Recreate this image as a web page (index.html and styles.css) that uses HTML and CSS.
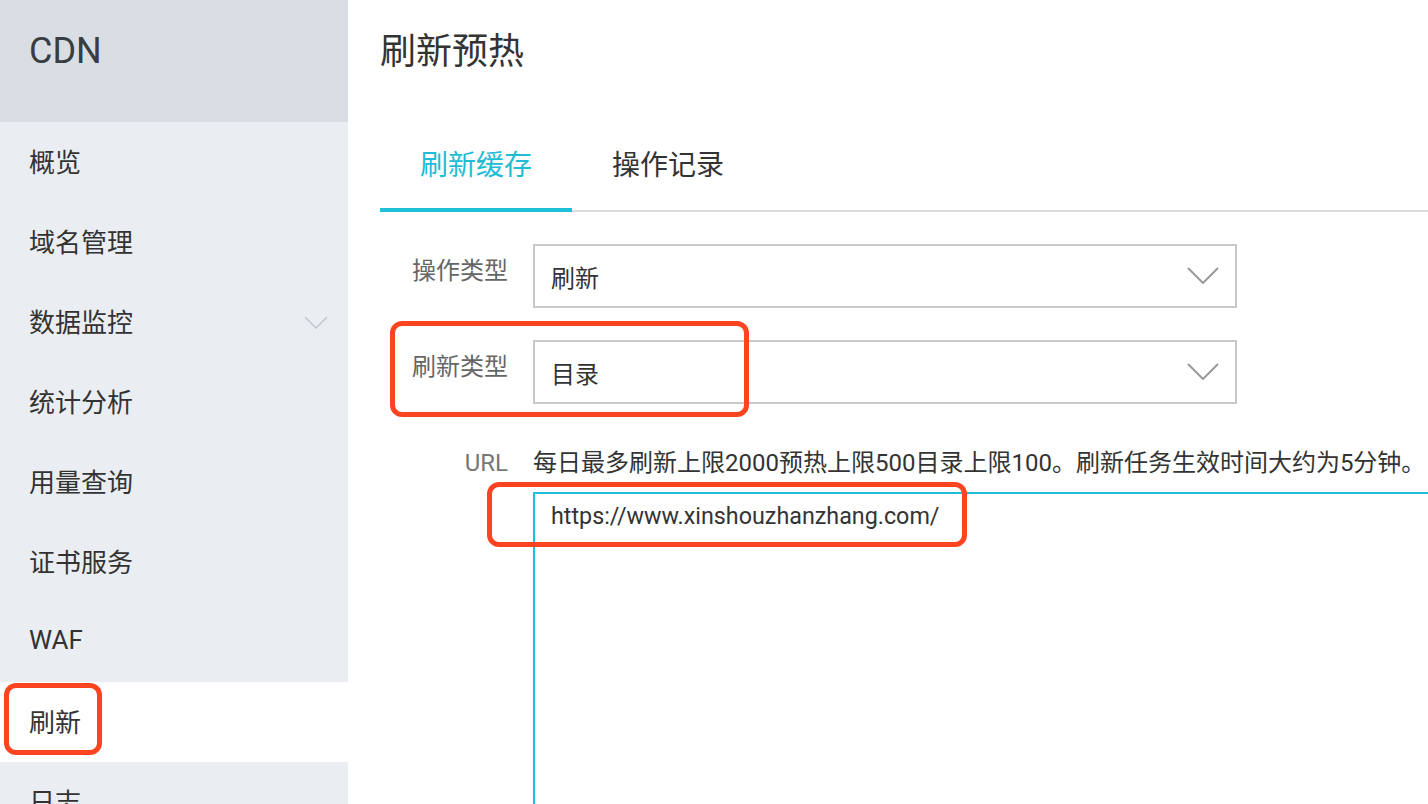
FILE: index.html
```html
<!DOCTYPE html>
<html lang="zh-CN">
<head>
<meta charset="utf-8">
<title>刷新预热 - CDN</title>
<link rel="stylesheet" href="styles.css">
</head>
<body>
<div class="app">
  <aside class="sidebar">
    <div class="sidebar-head">CDN</div>
    <nav class="menu">
      <div class="menu-item">概览</div>
      <div class="menu-item">域名管理</div>
      <div class="menu-item has-sub">数据监控
        <svg class="sub-arrow" width="24" height="13" viewBox="0 0 24 13"><polyline points="1,1 12,12 23,1" fill="none" stroke="#c4c8ce" stroke-width="1.5"/></svg>
      </div>
      <div class="menu-item">统计分析</div>
      <div class="menu-item">用量查询</div>
      <div class="menu-item">证书服务</div>
      <div class="menu-item">WAF</div>
      <div class="menu-item active">刷新</div>
      <div class="menu-item">日志</div>
    </nav>
  </aside>
  <main class="main">
    <h1 class="page-title">刷新预热</h1>
    <div class="tabs">
      <div class="tab active">刷新缓存</div>
      <div class="tab">操作记录</div>
    </div>
    <div class="form">
      <div class="form-row">
        <label class="form-label">操作类型</label>
        <div class="select">
          <span>刷新</span>
          <svg class="select-arrow" width="32" height="17" viewBox="0 0 32 17"><polyline points="1,1 16,16 31,1" fill="none" stroke="#9a9a9a" stroke-width="2"/></svg>
        </div>
      </div>
      <div class="form-row">
        <label class="form-label">刷新类型</label>
        <div class="select">
          <span>目录</span>
          <svg class="select-arrow" width="32" height="17" viewBox="0 0 32 17"><polyline points="1,1 16,16 31,1" fill="none" stroke="#9a9a9a" stroke-width="2"/></svg>
        </div>
      </div>
      <div class="form-row url-row">
        <label class="form-label url-label">URL</label>
        <div class="url-field">
          <div class="hint">每日最多刷新上限2000预热上限500目录上限100。刷新任务生效时间大约为5分钟。</div>
          <div class="textarea">https://www.xinshouzhanzhang.com/</div>
        </div>
      </div>
    </div>
  </main>
</div>
<div class="mark mark-type"></div>
<div class="mark mark-url"></div>
<div class="mark mark-menu"></div>
</body>
</html>
```

FILE: styles.css
```css
html, body {
  margin: 0;
  padding: 0;
  height: 100%;
  background: #ffffff;
}

body {
  position: relative;
  overflow: hidden;
  font-family: "Roboto", "Noto Sans CJK SC", sans-serif;
  color: #333333;
}

.app {
  display: flex;
  height: 100vh;
  overflow: hidden;
}

/* Sidebar */
.sidebar {
  width: 348px;
  flex: 0 0 348px;
  background: #eaedf1;
  display: flex;
  flex-direction: column;
  overflow: hidden;
}

.sidebar-head {
  flex: 0 0 122px;
  height: 122px;
  box-sizing: border-box;
  background: #d9dee4;
  padding: 27px 0 0 29px;
  font-size: 36px;
  line-height: 48px;
  color: #373d41;
}

.menu {
  display: flex;
  flex-direction: column;
  flex-shrink: 0;
}

.menu-item {
  flex: 0 0 80px;
  height: 80px;
  box-sizing: border-box;
  display: flex;
  align-items: center;
  padding-left: 29px;
  padding-bottom: 4px;
  font-size: 26px;
  color: #333333;
  position: relative;
}

.menu-item.has-sub {
  justify-content: space-between;
  padding-right: 20px;
}

.sub-arrow {
  margin-top: 4px;
}

.menu-item.active {
  background: #ffffff;
}

/* Main */
.main {
  flex: 1;
  min-width: 0;
  padding-left: 32px;
  overflow: hidden;
}

.page-title {
  margin: 0;
  height: 120px;
  box-sizing: border-box;
  padding-top: 28px;
  font-size: 36px;
  line-height: 48px;
  font-weight: normal;
  color: #333333;
}

.tabs {
  display: flex;
  border-bottom: 2px solid #dcdcdc;
}

.tab {
  padding: 3px 40px 0;
  font-size: 28px;
  line-height: 85px;
  border-bottom: 4px solid transparent;
  margin-bottom: -2px;
  color: #333333;
}

.tab.active {
  color: #1fbcd3;
  border-bottom-color: #1fbfd8;
}

.form {
  display: flex;
  flex-direction: column;
  gap: 32px;
  padding-top: 32px;
}

.form-row {
  display: flex;
  gap: 25px;
}

.form-label {
  width: 128px;
  flex: 0 0 128px;
  text-align: right;
  font-size: 24px;
  line-height: 24px;
  padding-top: 15px;
  color: #666666;
}

.select {
  width: 704px;
  height: 64px;
  box-sizing: border-box;
  border: 2px solid #c9c9c9;
  display: flex;
  align-items: center;
  justify-content: space-between;
  padding: 0 16px 0 16px;
  font-size: 24px;
  color: #333333;
}

.select-arrow {
  margin-top: -2px;
}

.url-label {
  color: #777777;
}

.url-field {
  flex: 1;
  min-width: 0;
}

.hint {
  padding-top: 15px;
  font-size: 24px;
  line-height: 24px;
  white-space: nowrap;
  color: #333333;
}

.textarea {
  margin-top: 17px;
  width: 1200px;
  height: 400px;
  border-top: 2px solid #1fbfd8;
  border-left: 2px solid #1fbfd8;
  padding: 8px 0 0 16px;
  font-size: 23.3px;
  line-height: 28px;
  color: #333333;
}

/* Annotation marks */
.mark {
  position: absolute;
  box-sizing: border-box;
  border: 5px solid #fd4420;
  border-radius: 12px;
  pointer-events: none;
}

.mark-type {
  left: 390px;
  top: 321px;
  width: 359px;
  height: 96px;
}

.mark-url {
  left: 487px;
  top: 482px;
  width: 480px;
  height: 65px;
}

.mark-menu {
  left: 4px;
  top: 683px;
  width: 98px;
  height: 72px;
}
```
